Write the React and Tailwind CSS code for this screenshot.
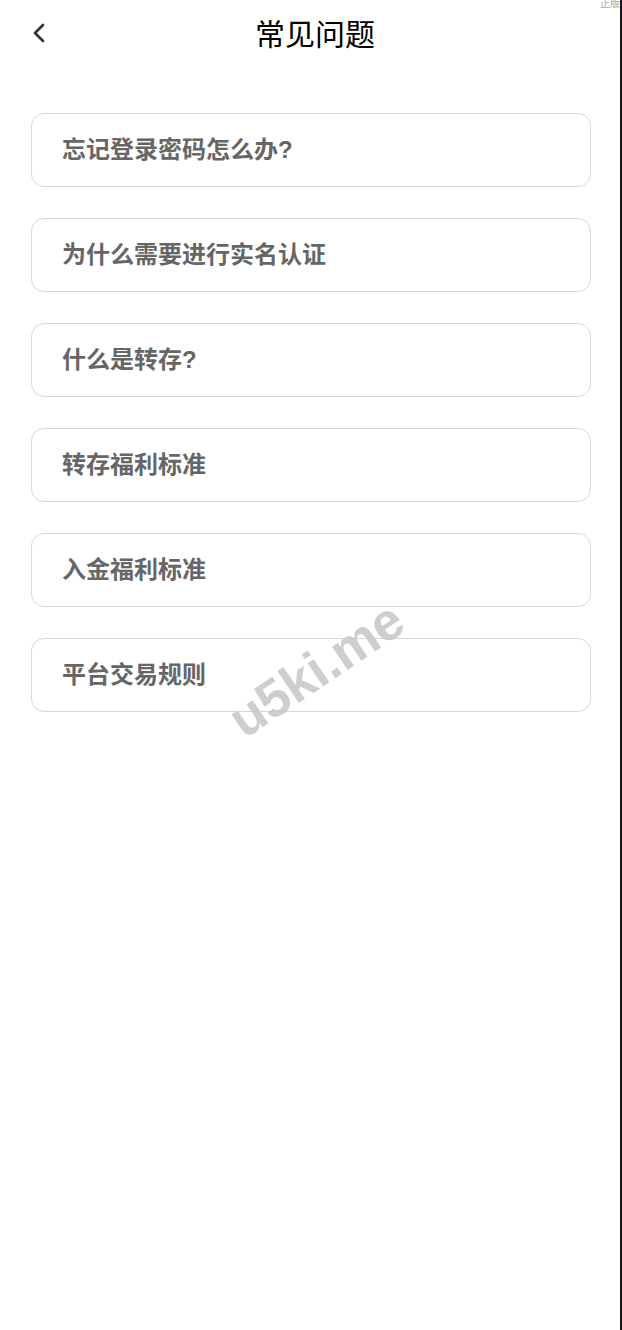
import { ChevronLeft } from 'lucide-react';

const questions = [
  '忘记登录密码怎么办?',
  '为什么需要进行实名认证',
  '什么是转存?',
  '转存福利标准',
  '入金福利标准',
  '平台交易规则',
];

export default function App() {
  return (
    <div className="flex min-h-screen bg-white" style={{ fontFamily: '"Liberation Sans", "Noto Sans CJK SC", sans-serif' }}>
      <main className="relative w-[620px] min-h-screen bg-white">
        <span className="absolute top-[-3px] right-0 text-[10px] leading-[14px] text-[#aaa]">正版</span>

        <header className="relative flex h-[70px] items-center justify-center">
          <button className="absolute left-[23px] top-[17px] p-0 text-[#333]">
            <ChevronLeft className="h-[32px] w-[32px]" strokeWidth={2} />
          </button>
          <h1 className="pl-[10px] text-[30px] font-normal leading-none text-black">常见问题</h1>
        </header>

        <div className="flex flex-col gap-[31px] pl-[31px] pr-[29px] pt-[43px]">
          {questions.map((q) => (
            <div
              key={q}
              className="flex h-[74px] items-center rounded-[13px] border border-[#d8d8d8] pl-[30px]"
            >
              <span className="text-[24px] font-bold text-[#666]">{q}</span>
            </div>
          ))}
        </div>

        <div className="pointer-events-none absolute left-[316px] top-[669px] -translate-x-1/2 -translate-y-1/2 rotate-[-34deg] text-[53px] font-bold leading-none text-[#c9c9c9]/90">
          u5ki.me
        </div>
      </main>
      <div className="w-[2px] min-h-screen bg-[#14141c]" />
    </div>
  );
}
